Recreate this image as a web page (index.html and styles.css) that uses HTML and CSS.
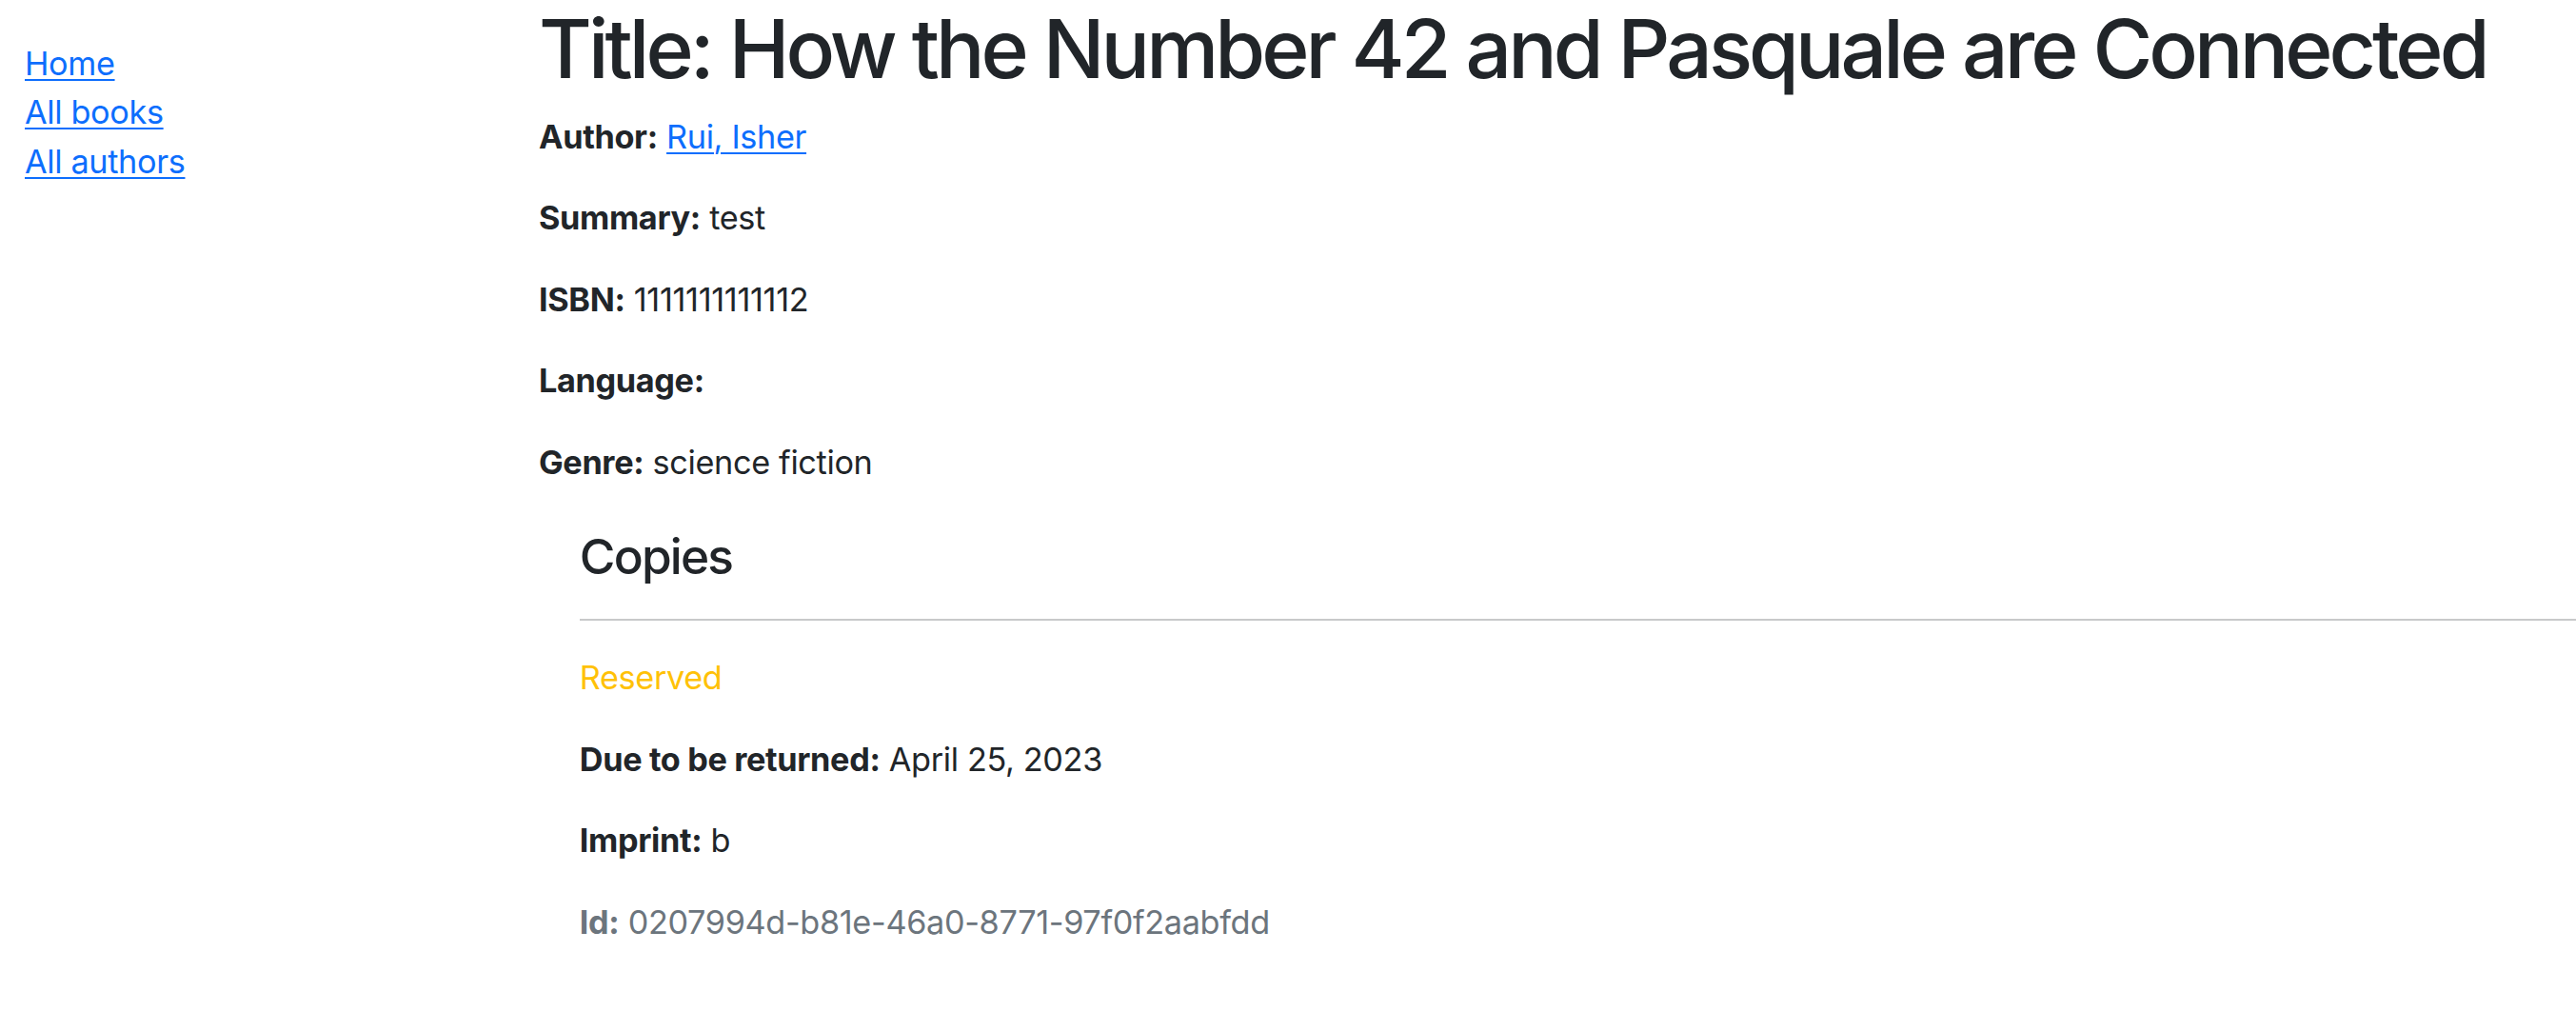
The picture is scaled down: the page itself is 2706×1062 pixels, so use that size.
FILE: index.html
```html
<!DOCTYPE html>
<html lang="en">
<head>
<meta charset="utf-8">
<title>Local Library</title>
<link rel="stylesheet" href="styles.css">
</head>
<body>
<div class="page">
  <div class="sidebar">
    <ul class="sidebar-nav">
      <li><a href="#">Home</a></li>
      <li><a href="#">All books</a></li>
      <li><a href="#">All authors</a></li>
    </ul>
  </div>
  <div class="main">
    <h1 class="title">Title: How the Number 42 and Pasquale are Connected</h1>
    <p><strong>Author:</strong> <a href="#">Rui, Isher</a></p>
    <p><strong>Summary:</strong> test</p>
    <p><strong>ISBN:</strong> 1111111111112</p>
    <p><strong>Language:</strong> </p>
    <p><strong>Genre:</strong> science fiction</p>
    <div class="copies">
      <h4 class="copies-title">Copies</h4>
      <hr class="rule">
      <p class="text-warning">Reserved</p>
      <p><strong>Due to be returned:</strong> April 25, 2023</p>
      <p><strong>Imprint:</strong> b</p>
      <p class="text-muted"><strong>Id:</strong> 0207994d-b81e-46a0-8771-97f0f2aabfdd</p>
    </div>
  </div>
</div>
</body>
</html>
```

FILE: styles.css
```css
html {
  font-size: 34.24px;
}
body {
  margin: 0;
  font-family: Inter, "Liberation Sans", sans-serif;
  font-size: 1rem;
  line-height: 1.5;
  letter-spacing: -0.01em;
  color: #212529;
  background: #ffffff;
}
a {
  color: #0d6efd;
  text-decoration: underline;
  text-decoration-thickness: 2px;
  text-underline-offset: 4px;
}
strong {
  font-weight: 700;
}
.page {
  display: flex;
  align-items: flex-start;
}
.sidebar {
  width: 566px;
  flex: none;
  box-sizing: border-box;
  padding-left: 26px;
}
.sidebar-nav {
  margin: 41px 0 0 0;
  padding: 0;
  list-style: none;
}
.main {
  flex: 1;
  min-width: 0;
}
.title {
  margin: 0 0 15px 0;
  font-size: 2.5rem;
  font-weight: 500;
  line-height: 1.2;
  letter-spacing: -0.046em;
  white-space: nowrap;
}
p {
  margin: 0 0 1rem 0;
}
.copies {
  margin-left: 1.25rem;
  margin-top: 1.25rem;
}
.copies-title {
  margin: 0 0 0.5rem 0;
  font-size: 1.5rem;
  font-weight: 500;
  line-height: 1.2;
  letter-spacing: -0.035em;
}
.rule {
  margin: 1rem 0;
  border: 0;
  border-top: 2px solid #c8c9ca;
  height: 0;
}
.text-warning {
  color: #ffc107;
}
.text-muted {
  color: #6c757d;
}
```
